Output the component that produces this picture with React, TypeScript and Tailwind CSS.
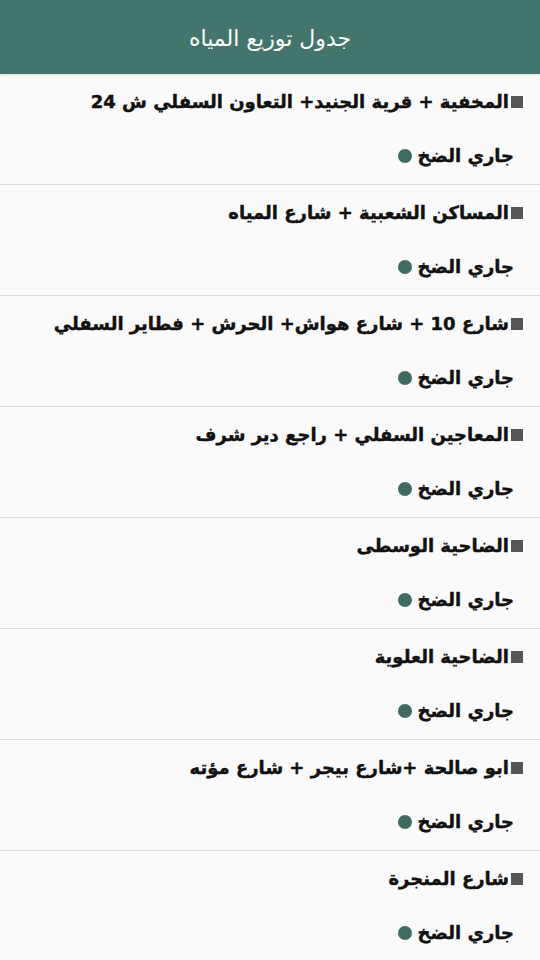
export default function App() {
  const areas = [
    "المخفية + قرية الجنيد+ التعاون السفلي ش 24",
    "المساكن الشعبية + شارع المياه",
    "شارع 10 + شارع هواش+ الحرش + فطاير السفلي",
    "المعاجين السفلي + راجع دير شرف",
    "الضاحية الوسطى",
    "الضاحية العلوية",
    "ابو صالحة +شارع بيجر + شارع مؤته",
    "شارع المنجرة",
  ];

  return (
    <div
      dir="rtl"
      className="w-[540px] h-[960px] overflow-hidden bg-[#fafafa]"
      style={{ fontFamily: '"DejaVu Sans", "Noto Sans", sans-serif' }}
    >
      {/* Header */}
      <header className="h-[74px] bg-[#44756d] flex items-center justify-center shadow-sm">
        <h1 className="text-white text-[22px] font-normal pt-[2px]">جدول توزيع المياه</h1>
      </header>

      {/* List */}
      <div>
        {areas.map((name) => (
          <div
            key={name}
            className="h-[111px] border-b border-[#dcdcdc] pr-[17px] pt-[16px] flex flex-col items-start"
          >
            <div className="flex items-center h-[24px]">
              <span className="w-[12px] h-[12px] bg-[#555555] ml-[2px]" />
              <span className="text-[18px] font-bold text-[#111111] leading-[24px] [-webkit-text-stroke:0.4px_#111111]">
                {name}
              </span>
            </div>
            <div className="flex items-center h-[24px] mt-[30px] pr-[9px]">
              <span className="text-[18px] font-bold text-[#111111] leading-[24px] [-webkit-text-stroke:0.4px_#111111]">
                جاري الضخ
              </span>
              <span className="w-[14px] h-[14px] rounded-full bg-[#3f6b63] mr-[6px]" />
            </div>
          </div>
        ))}
      </div>
    </div>
  );
}
